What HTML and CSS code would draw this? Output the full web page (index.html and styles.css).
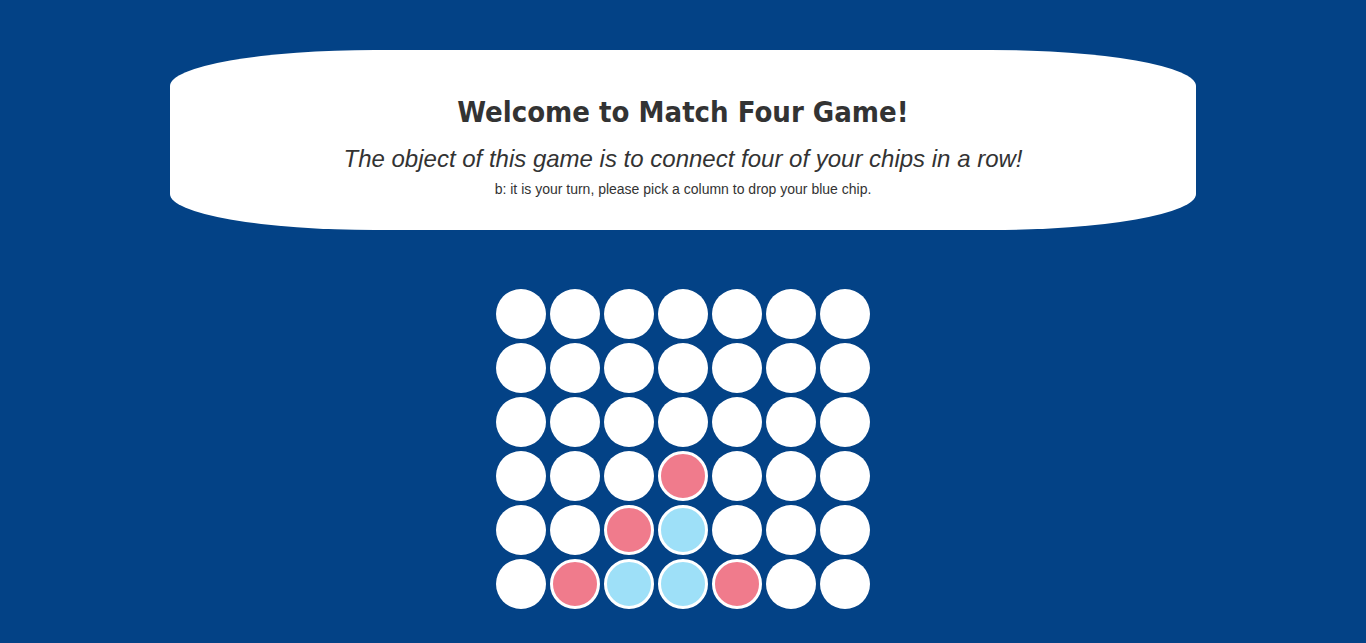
FILE: index.html
```html
<!DOCTYPE html>
<html lang="en">
<head>
<meta charset="utf-8">
<title>Match Four</title>
<link rel="stylesheet" href="styles.css">
</head>
<body>
<header class="banner">
  <h1 class="title">Welcome to Match Four Game!</h1>
  <p class="subtitle">The object of this game is to connect four of your chips in a row!</p>
  <p class="status">b: it is your turn, please pick a column to drop your blue chip.</p>
</header>
<main class="board">
  <div class="cell"></div><div class="cell"></div><div class="cell"></div><div class="cell"></div><div class="cell"></div><div class="cell"></div><div class="cell"></div>
  <div class="cell"></div><div class="cell"></div><div class="cell"></div><div class="cell"></div><div class="cell"></div><div class="cell"></div><div class="cell"></div>
  <div class="cell"></div><div class="cell"></div><div class="cell"></div><div class="cell"></div><div class="cell"></div><div class="cell"></div><div class="cell"></div>
  <div class="cell"></div><div class="cell"></div><div class="cell"></div><div class="cell red"></div><div class="cell"></div><div class="cell"></div><div class="cell"></div>
  <div class="cell"></div><div class="cell"></div><div class="cell red"></div><div class="cell blue"></div><div class="cell"></div><div class="cell"></div><div class="cell"></div>
  <div class="cell"></div><div class="cell red"></div><div class="cell blue"></div><div class="cell blue"></div><div class="cell red"></div><div class="cell"></div><div class="cell"></div>
</main>
</body>
</html>
```

FILE: styles.css
```css
html, body {
  margin: 0;
  padding: 0;
}
body {
  background: #034286;
  font-family: "Liberation Sans", Arial, sans-serif;
  color: #333333;
  min-height: 643px;
}
.banner {
  width: 1026px;
  height: 180px;
  margin: 50px auto 0;
  background: #ffffff;
  border-radius: 20% / 20%;
  box-sizing: border-box;
  padding-top: 38px;
  text-align: center;
}
.title {
  margin: 0;
  font-family: "Comic Sans MS", "DejaVu Sans Condensed", "DejaVu Sans", sans-serif;
  font-stretch: condensed;
  font-weight: bold;
  font-size: 29px;
  line-height: 48px;
}
.subtitle {
  margin: 8px 0 0;
  font-style: italic;
  font-size: 24px;
  line-height: 30px;
}
.status {
  margin: 4px 0 0;
  font-size: 14px;
  line-height: 22px;
}
.board {
  display: grid;
  grid-template-columns: repeat(7, 50px);
  gap: 4px;
  justify-content: center;
  margin-top: 59px;
}
.cell {
  width: 50px;
  height: 50px;
  border-radius: 50%;
  background: #ffffff;
  box-sizing: border-box;
}
.cell.red {
  border: 3px solid #ffffff;
  background: #f07b8c;
}
.cell.blue {
  border: 3px solid #ffffff;
  background: #9ee0f8;
}
```
